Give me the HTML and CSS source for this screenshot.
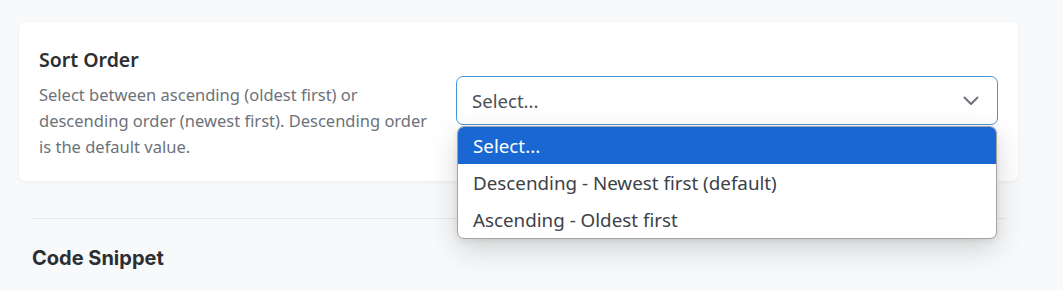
FILE: index.html
```html
<!DOCTYPE html>
<html lang="en">
<head>
<meta charset="utf-8">
<title>Sort Order</title>
<link rel="stylesheet" href="styles.css">
</head>
<body>
<main class="page">
  <section class="card">
    <div class="card-text">
      <h2 class="card-title">Sort Order</h2>
      <p class="card-desc">Select between ascending (oldest first) or descending order (newest first). Descending order is the default value.</p>
    </div>
    <div class="select-wrap">
      <div class="select">
        <span class="select-value">Select...</span>
        <svg class="chevron" width="16" height="10" viewBox="0 0 16 10" aria-hidden="true"><path d="M1.5 1.5 L8 8 L14.5 1.5" fill="none" stroke="#6b7079" stroke-width="2" stroke-linecap="round" stroke-linejoin="round"/></svg>
      </div>
      <ul class="listbox">
        <li class="option active">Select...</li>
        <li class="option">Descending - Newest first (default)</li>
        <li class="option">Ascending - Oldest first</li>
      </ul>
    </div>
  </section>
  <hr class="divider">
  <h3 class="section-title">Code Snippet</h3>
</main>
</body>
</html>
```
FILE: styles.css
```css
* { box-sizing: border-box; }
html, body { margin: 0; padding: 0; }
body {
  background: #f8f9fa;
  font-family: "Noto Sans", "Open Sans", sans-serif;
  color: #212529;
  height: 290px;
  overflow: hidden;
}
.page {
  padding: 22px 45px 0 19px;
}
.card {
  display: flex;
  align-items: flex-start;
  gap: 22px;
  background: #fff;
  border-radius: 6px;
  box-shadow: 0 1px 3px rgba(0,0,0,0.06);
  padding: 24px 20px 22px 20px;
  height: 159px;
}
.card-text {
  width: 395px;
  flex: none;
}
.card-title {
  margin: 0 0 8px;
  font-size: 19.5px;
  line-height: 28px;
  font-weight: 600;
  color: #2b2f33;
}
.card-desc {
  margin: 0;
  font-size: 16.5px;
  line-height: 26px;
  color: #6c727a;
}
.select-wrap {
  position: relative;
  flex: 1;
  margin-top: 30px;
}
.select {
  display: flex;
  align-items: center;
  justify-content: space-between;
  height: 49px;
  border: 1px solid #4b94d6;
  border-radius: 7px;
  padding: 0 18px 0 15px;
  background: #fff;
}
.select-value {
  font-size: 18.6px;
  color: #495057;
}
.chevron { display: block; }
.listbox {
  position: absolute;
  left: 1px;
  right: 1px;
  top: 50px;
  margin: 0;
  padding: 0;
  list-style: none;
  background: #fff;
  border: 1px solid #a3a3a3;
  border-radius: 7px;
  overflow: hidden;
  box-shadow: 0 10px 30px rgba(0,0,0,0.16), 0 2px 6px rgba(0,0,0,0.08);
  z-index: 2;
}
.option {
  height: 37px;
  line-height: 36px;
  padding: 1px 0 0 15px;
  font-size: 18.8px;
  color: #3d4248;
}
.option.active {
  background: #1967d2;
  color: #fff;
}
.divider {
  margin: 37px 12px 0 13px;
  border: 0;
  border-top: 1px solid #e6e8eb;
}
.section-title {
  margin: 27px 0 0 13px;
  font-family: Inter, "Noto Sans", sans-serif;
  font-size: 20px;
  font-weight: 700;
  color: #2b2f33;
}
```
